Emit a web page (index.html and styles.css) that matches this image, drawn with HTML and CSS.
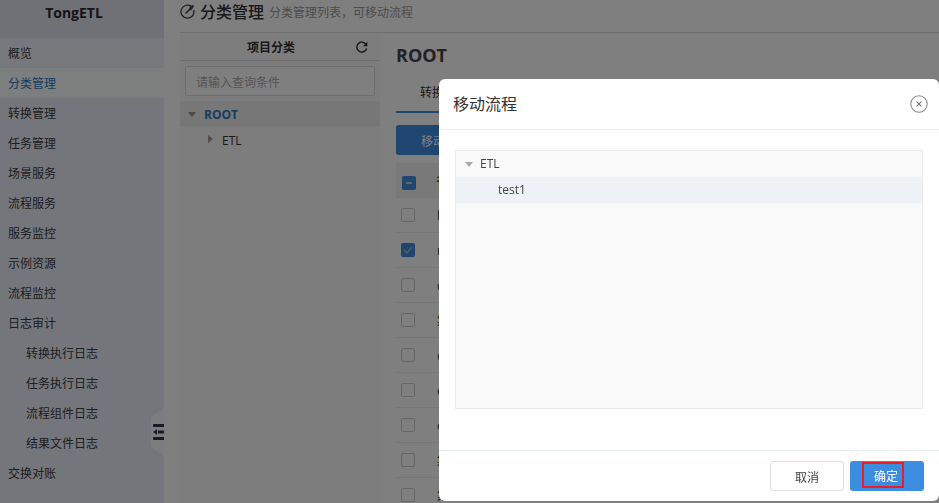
FILE: index.html
```html
<!DOCTYPE html>
<html lang="zh">
<head>
<meta charset="utf-8">
<title>TongETL</title>
<link rel="stylesheet" href="styles.css">
</head>
<body>
<div class="app">
  <aside class="sidebar">
    <div class="brand">TongETL</div>
    <nav class="menu">
      <div class="item first">概览</div>
      <div class="item active">分类管理</div>
      <div class="item">转换管理</div>
      <div class="item">任务管理</div>
      <div class="item">场景服务</div>
      <div class="item">流程服务</div>
      <div class="item">服务监控</div>
      <div class="item">示例资源</div>
      <div class="item">流程监控</div>
      <div class="item">日志审计</div>
      <div class="item sub">转换执行日志</div>
      <div class="item sub">任务执行日志</div>
      <div class="item sub">流程组件日志</div>
      <div class="item sub">结果文件日志</div>
      <div class="item">交换对账</div>
    </nav>
    <div class="collapse">
      <svg width="11" height="16" viewBox="0 0 11 16"><path fill="#2d3a4d" d="M0 0h11v3H0zM0 13h11v3H0zM5 6.5h6v3H5zM0 8l4-3v6z"/></svg>
    </div>
  </aside>
  <main class="main">
    <header class="pagehead">
      <svg class="headicon" width="15" height="15" viewBox="0 0 15 15" fill="none" stroke="#444" stroke-width="1.3"><path d="M11.2 2.4A6.5 6.5 0 1 0 13.7 6"/><path d="M5.6 9.6 13.4 1.4" stroke-width="1.5"/><path fill="#444" stroke="none" d="M9.6 2.8 12.4 1l1.4 1.4-1.8 3-2.6 1.6z"/></svg>
      <h1 class="title">分类管理</h1>
      <span class="subtitle">分类管理列表，可移动流程</span>
    </header>
    <div class="body">
      <section class="treepanel">
        <div class="treehead"><span class="treetitle">项目分类</span>
          <svg class="refresh" width="13" height="13" viewBox="0 0 13 13" fill="none" stroke="#333" stroke-width="1.5"><path d="M11 3.4A5 5 0 1 0 11.6 7.5"/><path fill="#333" stroke="none" d="M12.4 .8v4.4H8z"/></svg>
        </div>
        <div class="searchwrap"><input class="search" placeholder="请输入查询条件"></div>
        <div class="noderow rootrow"><i class="caret down"></i><span>ROOT</span></div>
        <div class="noderow etlrow"><i class="caret right"></i><span>ETL</span></div>
      </section>
      <section class="content">
        <h2 class="roottitle">ROOT</h2>
        <div class="tabs"><div class="tab">转换管理</div></div>
        <button class="movebtn">移动流程</button>
        <div class="table">
          <div class="row headrow"><i class="check part"></i><span>名称</span></div>
          <div class="row"><i class="check"></i><span>hello</span></div>
          <div class="row"><i class="check on"><svg width="14" height="14" viewBox="0 0 14 14" fill="none" stroke="#bbb" stroke-width="1.3"><path d="M3 7l3 3 5-6"/></svg></i><span>new</span></div>
          <div class="row"><i class="check"></i><span>csv</span></div>
          <div class="row"><i class="check"></i><span>集成</span></div>
          <div class="row"><i class="check"></i><span>csv</span></div>
          <div class="row"><i class="check"></i><span>csv</span></div>
          <div class="row"><i class="check"></i><span>csv</span></div>
          <div class="row"><i class="check"></i><span>集成</span></div>
          <div class="row"><i class="check"></i><span>集成</span></div>
        </div>
      </section>
    </div>
  </main>
</div>
<div class="mask"></div>
<div class="dialog">
  <div class="dialoghead">
    <span class="dialogtitle">移动流程</span>
    <svg class="close" width="18" height="18" viewBox="0 0 18 18" fill="none" stroke="#8a8a8a"><circle cx="9" cy="9" r="8.2" stroke-width="1.1"/><path d="M6.6 6.6l4.8 4.8M11.4 6.6l-4.8 4.8" stroke-width="1.2" stroke="#777"/></svg>
  </div>
  <div class="dialogbody">
    <div class="picker">
      <div class="pickrow"><i class="caret down light"></i><span>ETL</span></div>
      <div class="pickrow selected"><span>test1</span></div>
    </div>
  </div>
  <div class="dialogfoot">
    <button class="btn cancel">取消</button>
    <button class="btn ok"><span class="okmark">确定</span></button>
  </div>
</div>
</body>
</html>
```
FILE: styles.css
```css
* { box-sizing: border-box; }
html, body { margin: 0; height: 100%; overflow: hidden; }
body { font-family: "Noto Sans CJK SC", "Open Sans", sans-serif; font-size: 12px; color: #333; background: #fff; }
.app { display: flex; width: 939px; height: 503px; overflow: hidden; }

.sidebar { position: relative; flex: none; width: 164px; background: #e8edf9; }
.brand { height: 38px; padding-right: 16px; text-align: center; font: 700 14px/25px "Open Sans", sans-serif; color: #2a2a2a; background: #dfe3ec; }
.item { height: 30px; line-height: 30px; padding-left: 8px; font-size: 12px; color: #3c3c3c; }
.item.first { background: #eef1f8; }
.item.active { background: #fbfcfc; color: #2c78c8; }
.item.sub { padding-left: 26px; }
.collapse { position: absolute; right: 0; top: 407px; width: 13px; height: 50px; display: flex; align-items: center; justify-content: flex-end; background: #fbfbfb; clip-path: polygon(100% 0, 100% 100%, 0 78%, 0 22%); }

.main { flex: 1; min-width: 0; padding-left: 16px; background: #fff; }
.pagehead { display: flex; align-items: center; height: 33px; padding-bottom: 10px; border-bottom: 1px solid #ddd; }
.headicon { margin-right: 5px; }
.title { margin: 0 5px 0 0; font-size: 16px; font-weight: 500; color: #333; line-height: 22px; }
.subtitle { font-size: 12px; color: #999; }
.body { display: flex; height: 470px; }
.treepanel { flex: none; width: 200px; background: #fafafa; }
.treehead { position: relative; height: 28px; border-bottom: 1px solid #ddd; display: flex; align-items: center; justify-content: center; }
.treetitle { margin-right: 18px; font-size: 12px; font-weight: 700; color: #333; }
.refresh { position: absolute; right: 12px; top: 8px; }
.searchwrap { padding: 5px; }
.search { display: block; width: 190px; height: 30px; padding: 0 10px; border: 1px solid #ddd; border-radius: 2px; background: #fff; font: 12px "Noto Sans CJK SC", sans-serif; }
.search::placeholder { color: #aaa; }
.noderow { height: 26px; display: flex; align-items: center; font-family: "Open Sans", sans-serif; }
.rootrow { padding-left: 8px; background: #eeeeee; color: #2c78c8; font-weight: 700; font-size: 12px; }
.etlrow { padding-left: 28px; font-size: 12px; color: #333; }
.caret { display: block; flex: none; width: 0; height: 0; }
.caret.down { border-left: 4px solid transparent; border-right: 4px solid transparent; border-top: 5px solid #999; margin-right: 8px; }
.caret.right { border-top: 4px solid transparent; border-bottom: 4px solid transparent; border-left: 5px solid #a99; margin-right: 9px; margin-top: -3px; }

.content { flex: 1; min-width: 0; padding-left: 16px; }
.roottitle { margin: 0; height: 44px; font: 700 18px/45px "Open Sans", sans-serif; color: #444; }
.tabs { height: 36px; border-bottom: 1px solid #eee; }
.tab { width: 80px; height: 36px; padding-left: 24px; line-height: 29px; border-bottom: 2px solid #3c8de0; font-size: 12px; color: #333; }
.movebtn { display: block; width: 100px; height: 30px; margin: 12px 0 8px; padding: 0 0 0 25px; text-align: left; border: 0; border-radius: 3px; background: #3c8de0; color: #fff; font: 12px "Noto Sans CJK SC", sans-serif; }
.table { width: 400px; }
.row { height: 35px; display: flex; align-items: center; padding-left: 5px; border-bottom: 1px solid #eee; }
.row span { margin-left: 22px; font-family: "Open Sans", "Noto Sans CJK SC", sans-serif; }
.headrow { background: #f3f3f3; }
.headrow span { margin-left: 20px; }
.check { display: flex; flex: none; align-items: center; justify-content: center; width: 14px; height: 14px; border: 1px solid #ccc; border-radius: 2px; background: #fff; }
.check.on { border: 0; background: #3c8de0; }
.check.part { border: 0; background: #3c8de0; margin: 5px 0 0 1px; }
.check.part::after { content: ""; width: 6px; height: 2px; background: #ccc; }

.mask { position: fixed; inset: 0; background: rgba(0, 0, 0, .5); }
.dialog { position: fixed; left: 439px; top: 79px; width: 500px; height: 422px; display: flex; flex-direction: column; background: #fff; border-radius: 6px; }
.dialoghead { flex: none; height: 51px; display: flex; align-items: center; justify-content: space-between; padding: 0 11px 0 14px; border-bottom: 1px solid #e9edf5; }
.dialogtitle { margin-top: -2px; font-size: 16px; color: #333; }
.dialogbody { flex: 1; padding: 20px 16px 0; }
.picker { height: 259px; background: #f9f9f9; border: 1px solid #eaeaea; }
.pickrow { height: 26px; display: flex; align-items: center; padding-left: 9px; padding-bottom: 2px; font: 12px "Open Sans", sans-serif; color: #444; }
.pickrow .caret { margin-top: 2px; margin-right: 7px; }
.caret.light { border-top-color: #aaa; }
.selected { padding-left: 42px; background: #eef2f6; }
.dialogfoot { flex: none; height: 51px; display: flex; align-items: center; justify-content: flex-end; gap: 6px; padding: 0 15px 0 0; border-top: 1px solid #e9edf5; }
.btn { width: 74px; height: 30px; padding: 0; border-radius: 3px; font: 12px "Noto Sans CJK SC", sans-serif; }
.cancel { background: #fff; border: 1px solid #ddd; color: #444; }
.ok { display: flex; align-items: flex-start; background: #3c8de0; border: 0; color: #fff; }
.okmark { display: block; width: 42px; height: 26px; margin: 1px 0 0 12px; padding-left: 10px; text-align: left; line-height: 24px; border: 2px solid #ee1c25; white-space: nowrap; }
```
